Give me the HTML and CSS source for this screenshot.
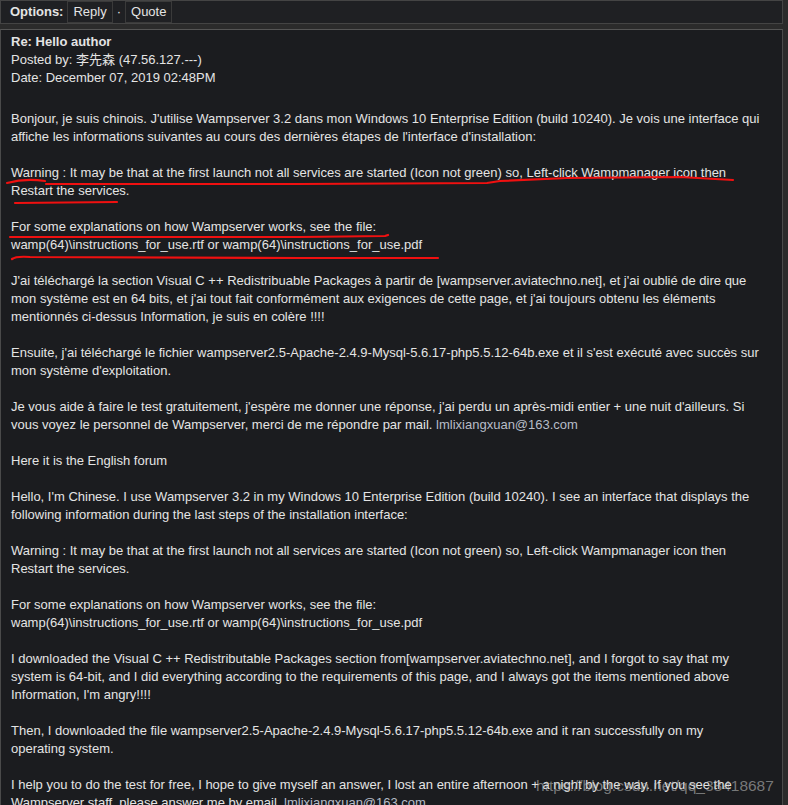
FILE: index.html
```html
<!DOCTYPE html>
<html lang="fr">
<head>
  <meta charset="UTF-8" />
  <title>Re: Hello author</title>
  <link rel="stylesheet" href="styles.css">
</head>
<body>
  <div class="options-bar">
    <span class="options-label">Options:</span>
    <a class="opt-btn">Reply</a>
    <span class="dot">&middot;</span>
    <a class="opt-btn">Quote</a>
  </div>

  <div class="post">
    <div class="post-head">
      <div class="subject">Re: Hello author</div>
      <div>Posted by: 李先森 (47.56.127.---)</div>
      <div>Date: December 07, 2019 02:48PM</div>
    </div>

    <div class="post-body">
      <p>Bonjour, je suis chinois. J'utilise Wampserver 3.2 dans mon Windows 10 Enterprise Edition (build 10240). Je vois une interface qui affiche les informations suivantes au cours des dernières étapes de l'interface d'installation:</p>
      <p>Warning : It may be that at the first launch not all services are started (Icon not green) so, Left-click Wampmanager icon then<br>Restart the services.</p>
      <p>For some explanations on how Wampserver works, see the file:<br>wamp(64)\instructions_for_use.rtf or wamp(64)\instructions_for_use.pdf</p>
      <p>J'ai téléchargé la section Visual C ++ Redistribuable Packages à partir de [wampserver.aviatechno.net], et j'ai oublié de dire que mon système est en 64 bits, et j'ai tout fait conformément aux exigences de cette page, et j'ai toujours obtenu les éléments mentionnés ci-dessus Information, je suis en colère !!!!</p>
      <p>Ensuite, j'ai téléchargé le fichier wampserver2.5-Apache-2.4.9-Mysql-5.6.17-php5.5.12-64b.exe et il s'est exécuté avec succès sur mon système d'exploitation.</p>
      <p>Je vous aide à faire le test gratuitement, j'espère me donner une réponse, j'ai perdu un après-midi entier + une nuit d'ailleurs. Si vous voyez le personnel de Wampserver, merci de me répondre par mail. <span class="mail">lmlixiangxuan@163.com</span></p>
      <p>Here it is the English forum</p>
      <p>Hello, I'm Chinese. I use Wampserver 3.2 in my Windows 10 Enterprise Edition (build 10240). I see an interface that displays the following information during the last steps of the installation interface:</p>
      <p>Warning : It may be that at the first launch not all services are started (Icon not green) so, Left-click Wampmanager icon then<br>Restart the services.</p>
      <p>For some explanations on how Wampserver works, see the file:<br>wamp(64)\instructions_for_use.rtf or wamp(64)\instructions_for_use.pdf</p>
      <p>I downloaded the Visual C ++ Redistributable Packages section from[wampserver.aviatechno.net], and I forgot to say that my system is 64-bit, and I did everything according to the requirements of this page, and I always got the items mentioned above Information, I'm angry!!!!</p>
      <p>Then, I downloaded the file wampserver2.5-Apache-2.4.9-Mysql-5.6.17-php5.5.12-64b.exe and it ran successfully on my<br>operating system.</p>
      <p>I help you to do the test for free, I hope to give myself an answer, I lost an entire afternoon + a night by the way. If you see the Wampserver staff, please answer me by email. <span class="mail">lmlixiangxuan@163.com</span></p>
    </div>
  </div>

  <!-- hand drawn marks on the screenshot -->
  <svg class="marks" width="788" height="805" viewBox="0 0 788 805">
    <g fill="none" stroke="#f01010" stroke-width="2.2" stroke-linecap="round" stroke-linejoin="round">
      <path d="M7 183 Q25 178 45 181" />
      <path d="M46 184 L300 184 L487 183 L500 181 L567 178 L680 177 L733 180" />
      <path d="M15 203 L117 202" />
      <path d="M10 237 L300 237 L385 236 L388 235" />
      <path d="M12 259 Q16 256 30 257 L300 258 L438 258" />
    </g>
  </svg>

  <div class="watermark">https://blog.csdn.net/qq_38418687</div>
</body>
</html>
```

FILE: styles.css
```css
* { margin: 0; padding: 0; box-sizing: border-box; }
html, body {
  background: #2b2b2b;
}
body {
  position: relative;
  width: 788px;
  font-family: 'Liberation Sans', 'Noto Sans CJK SC', sans-serif;
  font-size: 13px;
  line-height: 18px;
  color: #e4e4e4;
}
.options-bar {
  width: 783px;
  height: 24px;
  display: flex;
  align-items: center;
  gap: 3px;
  padding-left: 9px;
  background: #1f2023;
  border: 1px solid #444;
}
.options-label {
  font-weight: bold;
  margin-right: 1px;
}
.opt-btn {
  display: inline-block;
  height: 22px;
  line-height: 20px;
  padding: 0 5px;
  border: 1px solid #3a3a3a;
}
.dot {
  padding: 0 1px;
}
.post {
  width: 783px;
  margin-top: 5px;
  padding: 3px 9px 10px 10px;
  background: #1b1c1f;
  border: 1px solid #4a4a4a;
  border-top-color: #555;
  border-bottom: none;
  min-height: 776px;
}
.subject {
  font-weight: bold;
}
.post-body {
  margin-top: 23px;
}
.post-body p {
  margin-bottom: 18px;
}
.mail {
  color: #b7bcc8;
}
.marks {
  position: absolute;
  top: 0;
  left: 0;
  pointer-events: none;
}
.watermark {
  position: absolute;
  left: 536px;
  top: 776px;
  font-family: 'Liberation Sans', sans-serif;
  font-size: 15.5px;
  line-height: 20px;
  color: rgba(200, 200, 200, 0.55);
  pointer-events: none;
}
```
